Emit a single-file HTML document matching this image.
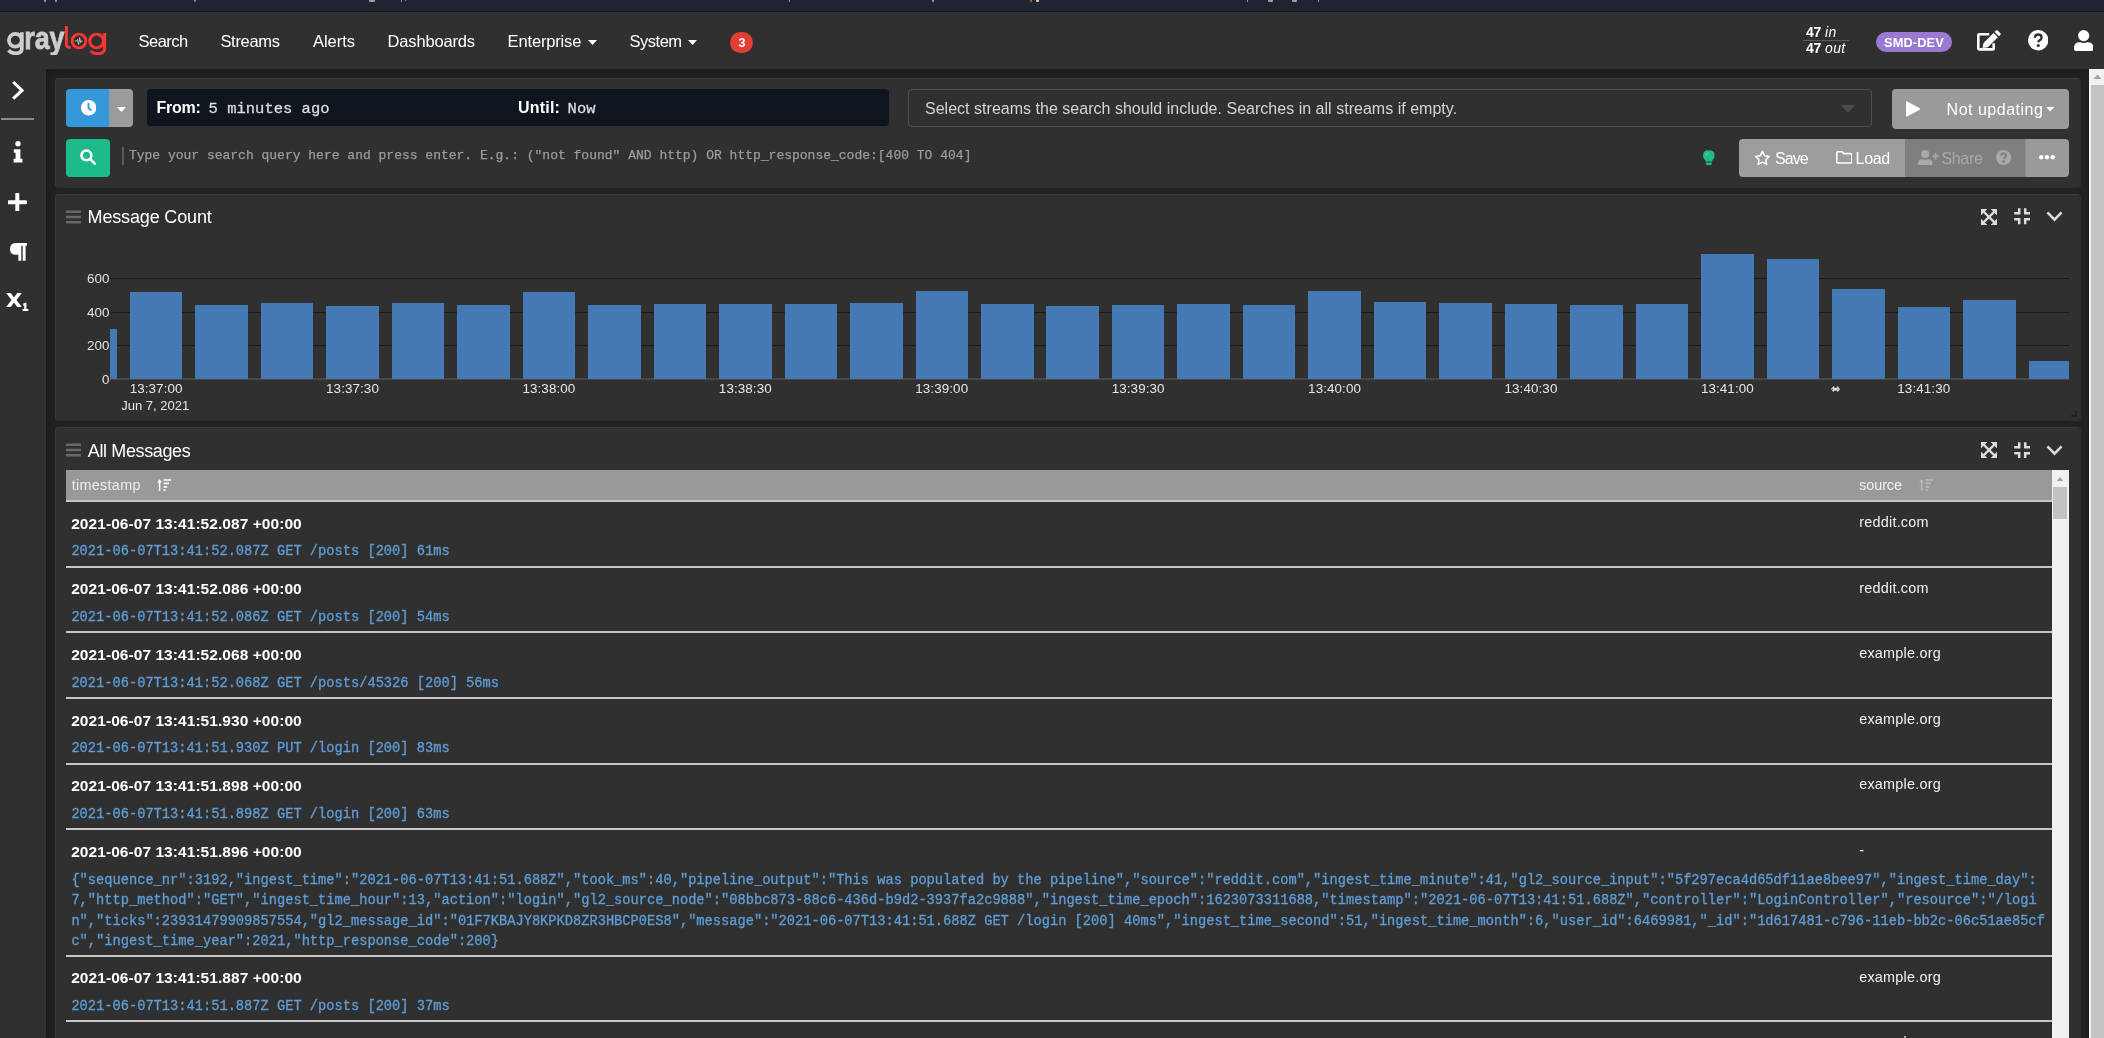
<!DOCTYPE html>
<html><head><meta charset="utf-8"><title>Graylog - Search</title>
<style>
html,body{margin:0;padding:0;width:2104px;height:1038px;overflow:hidden;}
body{width:2104px;height:1038px;overflow:hidden;background:#222;position:relative;font-family:"Liberation Sans",sans-serif;}
div,span.t,svg{position:absolute;}
div{box-sizing:border-box;}
.t{white-space:pre;line-height:1em;}
.s{font-family:"Liberation Sans",sans-serif;}
.m{font-family:"Liberation Mono",monospace;}
.panel{background:#303030;border:1px solid #393939;border-right-color:#2d2d2d;border-bottom-color:#2d2d2d;border-radius:4px;}
.sep{left:66px;width:1986px;height:2px;background:#c6c6c6;}
</style></head><body><div id="w" style="left:0;top:0;width:2104px;height:1038px;will-change:transform;overflow:hidden;">

<div style="left:0px;top:0px;width:2104px;height:12px;background:#1f2430;border-bottom:1px solid #171a22;"></div>
<div style="left:44px;top:0px;width:1.6px;height:2px;background:#9a9da5;border-radius:0 0 1px 1px;"></div>
<div style="left:55px;top:0px;width:1.6px;height:2px;background:#9a9da5;border-radius:0 0 1px 1px;"></div>
<div style="left:194.4px;top:0px;width:1.6px;height:2.4px;background:#83868e;border-radius:0 0 1px 1px;"></div>
<div style="left:369.4px;top:0px;width:5.6px;height:1.8px;background:#9a9da5;border-radius:0 0 1px 1px;"></div>
<div style="left:400.6px;top:0px;width:1.4px;height:2px;background:#83868e;border-radius:0 0 1px 1px;"></div>
<div style="left:405px;top:0px;width:1px;height:1.4px;background:#7c8aa8;border-radius:0 0 1px 1px;"></div>
<div style="left:788.6px;top:0px;width:1.6px;height:2px;background:#9a9da5;border-radius:0 0 1px 1px;"></div>
<div style="left:932px;top:0px;width:1.6px;height:2px;background:#9a9da5;border-radius:0 0 1px 1px;"></div>
<div style="left:1030px;top:0px;width:2px;height:1.6px;background:#c0504d;border-radius:0 0 1px 1px;"></div>
<div style="left:1036px;top:0px;width:3px;height:1.6px;background:#c9c9c9;border-radius:0 0 1px 1px;"></div>
<div style="left:1246.6px;top:0px;width:1.6px;height:2.2px;background:#9a9da5;border-radius:0 0 1px 1px;"></div>
<div style="left:1268px;top:0px;width:5px;height:1.8px;background:#9a9da5;border-radius:0 0 1px 1px;"></div>
<div style="left:1292px;top:0px;width:5px;height:1.8px;background:#9a9da5;border-radius:0 0 1px 1px;"></div>
<div style="left:1317.6px;top:0px;width:1.6px;height:2.2px;background:#9a9da5;border-radius:0 0 1px 1px;"></div>
<div style="left:0px;top:12px;width:2104px;height:57px;background:#303030;"></div>
<div style="left:46px;top:69px;width:2044px;height:969px;background:#222;box-shadow:inset 0 6px 6px -4px #1a1a1a, inset 6px 0 6px -4px #1c1c1c;"></div>
<div style="left:0px;top:69px;width:46px;height:969px;background:#303030;"></div>
<div style="left:2089px;top:69px;width:15px;height:969px;background:#c4c4c4;border-left:2px solid #f4f4f4;"></div>
<div style="left:2091px;top:69px;width:13px;height:16px;background:#f1f1f1;"></div>
<svg style="left:2093px;top:74px;" width="9" height="6" viewBox="0 0 9 6"><path d="M4.5 0.5 L8.5 5 H0.5Z" fill="#a3a3a3"/></svg>
<svg style="left:0px;top:20px;" width="120" height="35.3" viewBox="0 0 120 35.3"><g fill="none" stroke="#cdcdcd" stroke-width="3.7"><circle cx="15.3" cy="20.3" r="6.4"/><path d="M21.85 12.2 V28.4 Q21.85 33.3 15.6 33.3 Q11.2 33.3 8.4 30.4"/></g><text x="24.2" y="28.6" font-family="Liberation Sans, sans-serif" font-weight="700" font-size="31.5" fill="#cdcdcd" stroke="#cdcdcd" stroke-width="0.8" textLength="40.4" lengthAdjust="spacingAndGlyphs">ray</text><g fill="none" stroke="#ff3633" stroke-width="2.9"><path d="M66.4 6 V24.6 Q66.4 27.6 70.6 27.2" /><circle cx="79" cy="21" r="6.9"/><circle cx="96.6" cy="21" r="6.9"/><path d="M104.7 13 V27.6 Q104.7 34 97.2 33.7 Q93 33.6 90.6 31"/></g><path d="M74.8 21 H76.6 L77.6 19.4 L78.6 24.6 L79.6 17.6 L80.6 22.6 L81.2 21 H82.6" fill="none" stroke="#bbb" stroke-width="1"/></svg>
<span class="t s" style="left:138.6px;top:33px;font-size:16.5px;color:#ffffff;letter-spacing:-0.55px;">Search</span>
<span class="t s" style="left:220.4px;top:33px;font-size:16.5px;color:#ffffff;letter-spacing:-0.3px;">Streams</span>
<span class="t s" style="left:313px;top:33px;font-size:16.5px;color:#ffffff;letter-spacing:-0.05px;">Alerts</span>
<span class="t s" style="left:387.6px;top:33px;font-size:16.5px;color:#ffffff;letter-spacing:-0.18px;">Dashboards</span>
<span class="t s" style="left:507.6px;top:33px;font-size:16.5px;color:#ffffff;letter-spacing:-0.16px;">Enterprise</span>
<span class="t s" style="left:629.6px;top:33px;font-size:16.5px;color:#ffffff;letter-spacing:-0.5px;">System</span>
<svg style="left:588px;top:40px;" width="9" height="5" viewBox="0 0 9 5"><path d="M0 0H9L4.5 5Z" fill="#fff"/></svg>
<svg style="left:688px;top:40px;" width="9" height="5" viewBox="0 0 9 5"><path d="M0 0H9L4.5 5Z" fill="#fff"/></svg>
<div style="left:730.2px;top:32px;width:23.2px;height:21px;background:#e23e33;border-radius:10.5px;"></div>
<span class="t s" style="left:741.9px;top:37px;font-size:12.6px;color:#fff;font-weight:700;transform:translateX(-50%);">3</span>
<span class="t s" style="left:1806px;top:25px;font-size:14px;color:#fff;font-weight:700;letter-spacing:-0.2px;">47</span>
<span class="t s" style="left:1825px;top:25px;font-size:14px;color:#fff;letter-spacing:0.4px;font-style:italic;">in</span>
<div style="left:1803px;top:40px;width:46px;height:1px;background:#5c5c5c;"></div>
<span class="t s" style="left:1806px;top:41px;font-size:14px;color:#fff;font-weight:700;letter-spacing:-0.2px;">47</span>
<span class="t s" style="left:1825px;top:41px;font-size:14px;color:#fff;letter-spacing:0.4px;font-style:italic;">out</span>
<div style="left:1876px;top:32px;width:76px;height:20px;background:#9b78d2;border-radius:10px;"></div>
<span class="t s" style="left:1884px;top:37px;font-size:12.8px;color:#fff;font-weight:700;letter-spacing:0.12px;">SMD-DEV</span>
<svg style="left:1976px;top:29px;" width="27" height="23" viewBox="0 0 27 23"><path d="M17.7 14.2 V19.2 Q17.7 20.4 16.5 20.4 H3.5 Q2.3 20.4 2.3 19.2 V6.5 Q2.3 5.3 3.5 5.3 H13.2" fill="none" stroke="#fff" stroke-width="2.6"/><path d="M7.5 14 L17.6 3.9 L21.9 8.2 L11.8 18.3 L6.6 19.1 Z" fill="#fff"/><path d="M18.6 2.9 L19.9 1.6 Q20.8 0.8 21.7 1.6 L24.3 4.2 Q25.1 5.1 24.3 6 L23 7.3 Z" fill="#fff"/></svg>
<svg style="left:2028px;top:30.4px;" width="20.4" height="20.4" viewBox="0 0 20 20"><circle cx="10" cy="10" r="10" fill="#fff"/><path d="M6.7 7.6 Q6.9 4.4 10.1 4.4 Q13.3 4.4 13.3 7.3 Q13.3 9 11.4 10 Q10.2 10.7 10.2 12" fill="none" stroke="#303030" stroke-width="2.3"/><circle cx="10.1" cy="15.2" r="1.5" fill="#303030"/></svg>
<svg style="left:2074px;top:29.8px;" width="19.4" height="21" viewBox="0 0 19.4 21"><circle cx="9.7" cy="5.6" r="5.6" fill="#fff"/><path d="M0 19 V18 Q0 12.2 5.6 12.2 H6.2 Q9.7 13.8 13.2 12.2 H13.8 Q19.4 12.2 19.4 18 V19 Q19.4 21 17.4 21 H2 Q0 21 0 19 Z" fill="#fff"/></svg>
<svg style="left:11px;top:80px;" width="14" height="20" viewBox="0 0 14 20"><path d="M2.2 2 L11 10.4 L2.2 18.6" fill="none" stroke="#fff" stroke-width="3.1" stroke-linecap="butt"/></svg>
<div style="left:1px;top:118px;width:33px;height:2px;background:#8a8a8a;"></div>
<svg style="left:12.6px;top:141.4px;" width="10" height="21.6" viewBox="0 0 10 21.6"><circle cx="5" cy="2.8" r="2.7" fill="#fff"/><path d="M0.8 8.2 H7.4 V17.8 H9.4 V21.4 H0.6 V17.8 H2.6 V11.8 H0.8 Z" fill="#fff"/></svg>
<svg style="left:8.2px;top:193px;" width="18.6" height="18.4" viewBox="0 0 18.6 18.4"><path d="M9.3 1.2 V17.2 M1.2 9.2 H17.4" stroke="#fff" stroke-width="4" stroke-linecap="round"/></svg>
<svg style="left:9.6px;top:243px;" width="17" height="17.8" viewBox="0 0 17 17.8"><path d="M6.4 0 H17 V2.8 H15.6 V17.8 H12.7 V2.8 H11.3 V17.8 H8.4 V11.8 H6.2 Q0 11.8 0 5.9 Q0 0 6.4 0 Z" fill="#fff"/></svg>
<svg style="left:6px;top:293px;" width="23" height="18.4" viewBox="0 0 23 18.4"><path d="M0.2 0 H4.8 L8 4.4 L11.2 0 H15.8 L10.5 7 L15.8 14 H11.2 L8 9.6 L4.8 14 H0.2 L5.5 7 Z" fill="#fff"/><path d="M17.2 10.6 L20.4 9.4 V16 H22.4 V18.2 H16.6 V16 H18.2 V12.4 L17.2 12.8 Z" fill="#fff"/></svg>
<div class="panel" style="left:55px;top:78px;width:2026px;height:110px;"></div>
<div style="left:66px;top:89px;width:43.4px;height:37.6px;background:#3498db;border-radius:4px 0 0 4px;"></div>
<div style="left:109.4px;top:89px;width:24px;height:37.6px;background:#9b9b9b;border-radius:0 4px 4px 0;"></div>
<svg style="left:80.6px;top:100.4px;" width="15.4" height="15.4" viewBox="0 0 15.4 15.4"><circle cx="7.7" cy="7.7" r="7.7" fill="#fff"/><path d="M7.5 3.6 V8.1 L9.9 10" fill="none" stroke="#3498db" stroke-width="1.9" stroke-linecap="round"/></svg>
<svg style="left:116.6px;top:107px;" width="9" height="5" viewBox="0 0 9 5"><path d="M0 0H9L4.5 5Z" fill="#fff"/></svg>
<div style="left:146.8px;top:89.4px;width:742px;height:37px;background:#0e151e;border-radius:4px;"></div>
<span class="t s" style="left:156.6px;top:100px;font-size:16px;color:#fff;font-weight:700;letter-spacing:-0.3px;">From:</span>
<span class="t m" style="left:208.6px;top:102px;font-size:15.5px;color:#dcdcdc;-webkit-text-stroke:0.3px #dcdcdc;">5 minutes ago</span>
<span class="t s" style="left:518px;top:100px;font-size:16px;color:#fff;font-weight:700;letter-spacing:0.2px;">Until:</span>
<span class="t m" style="left:567.6px;top:102px;font-size:15.5px;color:#dcdcdc;-webkit-text-stroke:0.3px #dcdcdc;">Now</span>
<div style="left:908px;top:89px;width:964px;height:37.6px;border:1px solid #4e4e4e;border-radius:4px;"></div>
<span class="t s" style="left:925px;top:101px;font-size:16px;color:#d4d4d4;letter-spacing:0.02px;">Select streams the search should include. Searches in all streams if empty.</span>
<svg style="left:1841px;top:105px;" width="14" height="8" viewBox="0 0 14 8"><path d="M0 0H14L7 8Z" fill="#4c4c4c"/></svg>
<div style="left:1892px;top:89px;width:177px;height:39.6px;background:#9a9a9a;border-radius:4px;"></div>
<svg style="left:1906px;top:101px;" width="14.4" height="16" viewBox="0 0 14.4 16"><path d="M1.2 0.4 Q0 -0.2 0 1.4 V14.6 Q0 16.2 1.2 15.6 L13.4 9 Q14.4 8 13.4 7 Z" fill="#fff"/></svg>
<span class="t s" style="left:1946.6px;top:102px;font-size:16px;color:#fff;letter-spacing:0.5px;">Not updating</span>
<svg style="left:2046px;top:107.2px;" width="8.4" height="4.6" viewBox="0 0 9 5"><path d="M0 0H9L4.5 5Z" fill="#fff"/></svg>
<div style="left:66px;top:139.4px;width:44.4px;height:37.4px;background:#1dbb8b;border-radius:4px;"></div>
<svg style="left:80px;top:148.9px;" width="16.4" height="16" viewBox="0 0 16.4 16"><circle cx="6.4" cy="6.4" r="4.9" fill="none" stroke="#fff" stroke-width="2.6"/><path d="M10.2 10 L14.8 14.6" stroke="#fff" stroke-width="2.5" stroke-linecap="round"/></svg>
<div style="left:122.4px;top:147.4px;width:2px;height:17.4px;background:#595959;"></div>
<span class="t m" style="left:128.9px;top:149px;font-size:13px;color:#9c9c9c;-webkit-text-stroke:0.25px #9c9c9c;">Type your search query here and press enter. E.g.: (&quot;not found&quot; AND http) OR http_response_code:[400 TO 404]</span>
<svg style="left:1703px;top:149.8px;" width="11.6" height="15.6" viewBox="0 0 12.4 16"><path d="M6.2 0 Q12.4 0 12.4 5.8 Q12.4 8 10.8 9.8 Q9.8 11 9.6 12 H2.8 Q2.6 11 1.6 9.8 Q0 8 0 5.8 Q0 0 6.2 0 Z" fill="#1dbb8b"/><path d="M2.9 13 H9.5 V14.2 L8.6 15.6 Q8.4 16 7.8 16 H4.6 Q4 16 3.8 15.6 L2.9 14.2 Z" fill="#1dbb8b"/><path d="M3 5.6 Q3.2 3 6 2.8" fill="none" stroke="#5fd9b5" stroke-width="1"/></svg>
<div style="left:1739px;top:139px;width:166px;height:37.8px;background:#9d9d9d;border-radius:4px 0 0 4px;"></div>
<div style="left:1905px;top:139px;width:120px;height:37.8px;background:#7f7f7f;"></div>
<div style="left:2025px;top:139px;width:44px;height:37.8px;background:#9a9a9a;border-radius:0 4px 4px 0;border-left:1px solid #8c8c8c;"></div>
<svg style="left:1753.6px;top:149.6px;" width="16.8" height="16" viewBox="0 0 16.8 16"><path d="M8.4 1.4 L10.5 5.7 L15.2 6.4 L11.8 9.7 L12.6 14.4 L8.4 12.2 L4.2 14.4 L5 9.7 L1.6 6.4 L6.3 5.7 Z" fill="none" stroke="#fff" stroke-width="1.5" stroke-linejoin="round"/></svg>
<span class="t s" style="left:1775px;top:151px;font-size:16px;color:#fff;letter-spacing:-0.95px;">Save</span>
<svg style="left:1835.6px;top:151.4px;" width="16.6" height="12.8" viewBox="0 0 16.6 12.8"><path d="M1.9 0.8 H6 L7.8 2.6 H14.7 Q15.8 2.6 15.8 3.7 V10.9 Q15.8 12 14.7 12 H1.9 Q0.8 12 0.8 10.9 V1.9 Q0.8 0.8 1.9 0.8 Z" fill="none" stroke="#fff" stroke-width="1.6"/></svg>
<span class="t s" style="left:1855.6px;top:151px;font-size:16px;color:#fff;letter-spacing:-0.35px;">Load</span>
<svg style="left:1917.6px;top:149.8px;" width="21" height="15.6" viewBox="0 0 21 15.6"><circle cx="7.2" cy="4" r="4" fill="#a9a9a9"/><path d="M0 15.6 V13.4 Q0 9.2 4.2 9.2 H4.8 Q7.2 10.2 9.6 9.2 H10.2 Q14.4 9.2 14.4 13.4 V15.6 Z" fill="#a9a9a9"/><path d="M17.6 3.2 V9.4 M14.6 6.3 H20.6" stroke="#a9a9a9" stroke-width="1.9"/></svg>
<span class="t s" style="left:1941.4px;top:151px;font-size:16px;color:#a9a9a9;letter-spacing:-0.3px;">Share</span>
<svg style="left:1996px;top:150px;" width="15.2" height="15.2" viewBox="0 0 20 20"><circle cx="10" cy="10" r="10" fill="#a9a9a9"/><path d="M6.7 7.6 Q6.9 4.4 10.1 4.4 Q13.3 4.4 13.3 7.3 Q13.3 9 11.4 10 Q10.2 10.7 10.2 12" fill="none" stroke="#7f7f7f" stroke-width="2.4"/><circle cx="10.1" cy="15.2" r="1.6" fill="#7f7f7f"/></svg>
<svg style="left:2038.8px;top:155.2px;" width="16" height="4.6" viewBox="0 0 16 4.6"><circle cx="2.3" cy="2.3" r="2.2" fill="#fff"/><circle cx="8" cy="2.3" r="2.2" fill="#fff"/><circle cx="13.7" cy="2.3" r="2.2" fill="#fff"/></svg>
<div class="panel" style="left:55px;top:194px;width:2026px;height:227px;"></div>
<svg style="left:66.2px;top:209.6px;" width="15" height="14" viewBox="0 0 15 14"><path d="M0 1.7 H15 M0 7 H15 M0 12.3 H15" stroke="#686868" stroke-width="2.6"/></svg>
<span class="t s" style="left:87.6px;top:208px;font-size:18px;color:#fff;letter-spacing:-0.16px;">Message Count</span>
<svg style="left:1981px;top:208.6px;" width="16" height="16" viewBox="0 0 16 16"><path d="M2.6 2.6 L13.4 13.4 M13.4 2.6 L2.6 13.4" stroke="#dcdcdc" stroke-width="2.2"/><path d="M0 0 H6 L0 6 Z M16 0 V6 L10 0 Z M0 16 V10 L6 16 Z M16 16 H10 L16 10 Z" fill="#dcdcdc" stroke="#dcdcdc" stroke-width="0.6" stroke-linejoin="round"/></svg>
<svg style="left:2014px;top:208.4px;" width="16.4" height="16.4" viewBox="0 0 16.4 16.4"><path d="M0.2 5.2 H5.2 V0.2 M11.2 0.2 V5.2 H16.2 M0.2 11.2 H5.2 V16.2 M11.2 16.2 V11.2 H16.2" fill="none" stroke="#dcdcdc" stroke-width="2.5"/></svg>
<svg style="left:2046.4px;top:211.2px;" width="17" height="11" viewBox="0 0 17 11"><path d="M1.4 1.4 L8.5 8.6 L15.6 1.4" fill="none" stroke="#dcdcdc" stroke-width="2.5"/></svg>
<div style="left:110px;top:278px;width:1959px;height:1px;background:#1b1b1b;"></div>
<span class="t s" style="left:109.4px;top:272px;font-size:13.4px;color:#e2e2e2;transform:translateX(-100%);">600</span>
<div style="left:110px;top:312px;width:1959px;height:1px;background:#1b1b1b;"></div>
<span class="t s" style="left:109.4px;top:306px;font-size:13.4px;color:#e2e2e2;transform:translateX(-100%);">400</span>
<div style="left:110px;top:345px;width:1959px;height:1px;background:#1b1b1b;"></div>
<span class="t s" style="left:109.4px;top:339px;font-size:13.4px;color:#e2e2e2;transform:translateX(-100%);">200</span>
<div style="left:110px;top:378.4px;width:1959px;height:2px;background:#484848;"></div>
<span class="t s" style="left:109.4px;top:373px;font-size:13.4px;color:#e2e2e2;transform:translateX(-100%);">0</span>
<div style="left:110px;top:328.8px;width:7.0px;height:50.30000000000001px;background:#4579b4;"></div>
<div style="left:129.8px;top:292.4px;width:52.5px;height:86.7px;background:#4579b4;"></div>
<div style="left:195.3px;top:305.3px;width:52.5px;height:73.8px;background:#4579b4;"></div>
<div style="left:260.8px;top:303.3px;width:52.5px;height:75.8px;background:#4579b4;"></div>
<div style="left:326.3px;top:305.6px;width:52.5px;height:73.5px;background:#4579b4;"></div>
<div style="left:391.7px;top:303.3px;width:52.5px;height:75.8px;background:#4579b4;"></div>
<div style="left:457.2px;top:305px;width:52.5px;height:74.1px;background:#4579b4;"></div>
<div style="left:522.7px;top:292px;width:52.5px;height:87.1px;background:#4579b4;"></div>
<div style="left:588.1px;top:304.6px;width:52.5px;height:74.5px;background:#4579b4;"></div>
<div style="left:653.6px;top:304.3px;width:52.5px;height:74.8px;background:#4579b4;"></div>
<div style="left:719.1px;top:304.3px;width:52.5px;height:74.8px;background:#4579b4;"></div>
<div style="left:784.6px;top:304px;width:52.5px;height:75.1px;background:#4579b4;"></div>
<div style="left:850.0px;top:303.3px;width:52.5px;height:75.8px;background:#4579b4;"></div>
<div style="left:915.5px;top:290.7px;width:52.5px;height:88.4px;background:#4579b4;"></div>
<div style="left:981.0px;top:303.7px;width:52.5px;height:75.4px;background:#4579b4;"></div>
<div style="left:1046.4px;top:305.6px;width:52.5px;height:73.5px;background:#4579b4;"></div>
<div style="left:1111.9px;top:305px;width:52.5px;height:74.1px;background:#4579b4;"></div>
<div style="left:1177.4px;top:303.7px;width:52.5px;height:75.4px;background:#4579b4;"></div>
<div style="left:1242.8px;top:305px;width:52.5px;height:74.1px;background:#4579b4;"></div>
<div style="left:1308.3px;top:291px;width:52.5px;height:88.1px;background:#4579b4;"></div>
<div style="left:1373.8px;top:301.7px;width:52.5px;height:77.4px;background:#4579b4;"></div>
<div style="left:1439.2px;top:303.3px;width:52.5px;height:75.8px;background:#4579b4;"></div>
<div style="left:1504.7px;top:304px;width:52.5px;height:75.1px;background:#4579b4;"></div>
<div style="left:1570.2px;top:305px;width:52.5px;height:74.1px;background:#4579b4;"></div>
<div style="left:1635.7px;top:304px;width:52.5px;height:75.1px;background:#4579b4;"></div>
<div style="left:1701.1px;top:253.9px;width:52.5px;height:125.2px;background:#4579b4;"></div>
<div style="left:1766.6px;top:259.4px;width:52.5px;height:119.7px;background:#4579b4;"></div>
<div style="left:1832.1px;top:289.1px;width:52.5px;height:90.0px;background:#4579b4;"></div>
<div style="left:1897.5px;top:306.6px;width:52.5px;height:72.5px;background:#4579b4;"></div>
<div style="left:1963.0px;top:300.4px;width:52.5px;height:78.7px;background:#4579b4;"></div>
<div style="left:2028.5px;top:361.2px;width:40.5px;height:17.9px;background:#4579b4;"></div>
<span class="t s" style="left:156.1px;top:382px;font-size:13.4px;color:#e8e8e8;letter-spacing:0.1px;transform:translateX(-50%);">13:37:00</span>
<span class="t s" style="left:352.51px;top:382px;font-size:13.4px;color:#e8e8e8;letter-spacing:0.1px;transform:translateX(-50%);">13:37:30</span>
<span class="t s" style="left:548.92px;top:382px;font-size:13.4px;color:#e8e8e8;letter-spacing:0.1px;transform:translateX(-50%);">13:38:00</span>
<span class="t s" style="left:745.33px;top:382px;font-size:13.4px;color:#e8e8e8;letter-spacing:0.1px;transform:translateX(-50%);">13:38:30</span>
<span class="t s" style="left:941.74px;top:382px;font-size:13.4px;color:#e8e8e8;letter-spacing:0.1px;transform:translateX(-50%);">13:39:00</span>
<span class="t s" style="left:1138.1499999999999px;top:382px;font-size:13.4px;color:#e8e8e8;letter-spacing:0.1px;transform:translateX(-50%);">13:39:30</span>
<span class="t s" style="left:1334.56px;top:382px;font-size:13.4px;color:#e8e8e8;letter-spacing:0.1px;transform:translateX(-50%);">13:40:00</span>
<span class="t s" style="left:1530.9699999999998px;top:382px;font-size:13.4px;color:#e8e8e8;letter-spacing:0.1px;transform:translateX(-50%);">13:40:30</span>
<span class="t s" style="left:1727.3799999999999px;top:382px;font-size:13.4px;color:#e8e8e8;letter-spacing:0.1px;transform:translateX(-50%);">13:41:00</span>
<span class="t s" style="left:1923.79px;top:382px;font-size:13.4px;color:#e8e8e8;letter-spacing:0.1px;transform:translateX(-50%);">13:41:30</span>
<span class="t s" style="left:155.2px;top:399px;font-size:13px;color:#e8e8e8;transform:translateX(-50%);">Jun 7, 2021</span>
<svg style="left:1830.8px;top:386px;" width="9.2" height="6.2" viewBox="0 0 9.2 6.2"><path d="M0 3.1 L2.7 0.1 L3.3 1.7 H5.9 L6.5 0.1 L9.2 3.1 L6.5 6.1 L5.9 4.5 H3.3 L2.7 6.1 Z" fill="#e4e4e4"/><circle cx="1.7" cy="3.1" r="0.55" fill="#111"/><path d="M6.6 2.3 L7.8 3.1 L6.6 3.9Z" fill="#333"/></svg>
<svg style="left:2070px;top:410px;" width="7" height="7" viewBox="0 0 7 7"><path d="M6 1 V6 H1" fill="none" stroke="#1c1c1c" stroke-width="1.4"/></svg>
<div class="panel" style="left:55px;top:427px;width:2026px;height:640px;"></div>
<svg style="left:66.2px;top:443.4px;" width="15" height="14" viewBox="0 0 15 14"><path d="M0 1.7 H15 M0 7 H15 M0 12.3 H15" stroke="#686868" stroke-width="2.6"/></svg>
<span class="t s" style="left:87.8px;top:442px;font-size:18px;color:#fff;letter-spacing:-0.38px;">All Messages</span>
<svg style="left:1981px;top:442.2px;" width="16" height="16" viewBox="0 0 16 16"><path d="M2.6 2.6 L13.4 13.4 M13.4 2.6 L2.6 13.4" stroke="#dcdcdc" stroke-width="2.2"/><path d="M0 0 H6 L0 6 Z M16 0 V6 L10 0 Z M0 16 V10 L6 16 Z M16 16 H10 L16 10 Z" fill="#dcdcdc" stroke="#dcdcdc" stroke-width="0.6" stroke-linejoin="round"/></svg>
<svg style="left:2014px;top:442.0px;" width="16.4" height="16.4" viewBox="0 0 16.4 16.4"><path d="M0.2 5.2 H5.2 V0.2 M11.2 0.2 V5.2 H16.2 M0.2 11.2 H5.2 V16.2 M11.2 16.2 V11.2 H16.2" fill="none" stroke="#dcdcdc" stroke-width="2.5"/></svg>
<svg style="left:2046.4px;top:444.8px;" width="17" height="11" viewBox="0 0 17 11"><path d="M1.4 1.4 L8.5 8.6 L15.6 1.4" fill="none" stroke="#dcdcdc" stroke-width="2.5"/></svg>
<div style="left:66px;top:470.4px;width:1986px;height:31.6px;background:#999;border-bottom:2px solid #c4c4c4;"></div>
<span class="t s" style="left:71.8px;top:478px;font-size:14.4px;color:#ececec;letter-spacing:0.28px;">timestamp</span>
<svg style="left:157px;top:479px;" width="14" height="12.4" viewBox="0 0 14 12.4"><g opacity="1"><path d="M2.6 12.4 V2.4" stroke="#fff" stroke-width="1.5"/><path d="M0 3.6 L2.6 0.2 L5.2 3.6 Z" fill="#fff"/><path d="M6.6 1 H14 M6.6 4.4 H12 M6.6 7.8 H10.2 M6.6 11.2 H8.6" stroke="#fff" stroke-width="1.7"/></g></svg>
<span class="t s" style="left:1859.2px;top:478px;font-size:14.4px;color:#f0f0f0;letter-spacing:-0.08px;">source</span>
<svg style="left:1919.4px;top:479px;" width="14" height="12.4" viewBox="0 0 14 12.4"><g opacity="0.75"><path d="M2.6 12.4 V2.4" stroke="#c4c4c4" stroke-width="1.5"/><path d="M0 3.6 L2.6 0.2 L5.2 3.6 Z" fill="#c4c4c4"/><path d="M6.6 1 H14 M6.6 4.4 H12 M6.6 7.8 H10.2 M6.6 11.2 H8.6" stroke="#c4c4c4" stroke-width="1.7"/></g></svg>
<div style="left:2052px;top:470.4px;width:17px;height:600px;background:#f1f1f1;"></div>
<svg style="left:2056.3px;top:476.8px;" width="8" height="4.4" viewBox="0 0 8 5"><path d="M4 0 L8 5 H0Z" fill="#a3a3a3"/></svg>
<div style="left:2053px;top:487px;width:14.4px;height:32.4px;background:#c1c1c1;"></div>
<span class="t s" style="left:71.2px;top:516px;font-size:15.5px;color:#fff;font-weight:700;letter-spacing:0.06px;">2021-06-07 13:41:52.087 +00:00</span>
<span class="t s" style="left:1859.2px;top:515px;font-size:14.4px;color:#f2f2f2;letter-spacing:0.24px;">reddit.com</span>
<span class="t m" style="left:71.4px;top:545px;font-size:13.71px;color:#5f9dd6;-webkit-text-stroke:0.3px #5f9dd6;">2021-06-07T13:41:52.087Z GET /posts [200] 61ms</span>
<div class="sep" style="top:565.9px"></div>
<span class="t s" style="left:71.2px;top:581px;font-size:15.5px;color:#fff;font-weight:700;letter-spacing:0.06px;">2021-06-07 13:41:52.086 +00:00</span>
<span class="t s" style="left:1859.2px;top:581px;font-size:14.4px;color:#f2f2f2;letter-spacing:0.24px;">reddit.com</span>
<span class="t m" style="left:71.4px;top:611px;font-size:13.71px;color:#5f9dd6;-webkit-text-stroke:0.3px #5f9dd6;">2021-06-07T13:41:52.086Z GET /posts [200] 54ms</span>
<div class="sep" style="top:631.4px"></div>
<span class="t s" style="left:71.2px;top:647px;font-size:15.5px;color:#fff;font-weight:700;letter-spacing:0.06px;">2021-06-07 13:41:52.068 +00:00</span>
<span class="t s" style="left:1859.2px;top:646px;font-size:14.4px;color:#f2f2f2;letter-spacing:0.24px;">example.org</span>
<span class="t m" style="left:71.4px;top:677px;font-size:13.71px;color:#5f9dd6;-webkit-text-stroke:0.3px #5f9dd6;">2021-06-07T13:41:52.068Z GET /posts/45326 [200] 56ms</span>
<div class="sep" style="top:697.0px"></div>
<span class="t s" style="left:71.2px;top:713px;font-size:15.5px;color:#fff;font-weight:700;letter-spacing:0.06px;">2021-06-07 13:41:51.930 +00:00</span>
<span class="t s" style="left:1859.2px;top:712px;font-size:14.4px;color:#f2f2f2;letter-spacing:0.24px;">example.org</span>
<span class="t m" style="left:71.4px;top:742px;font-size:13.71px;color:#5f9dd6;-webkit-text-stroke:0.3px #5f9dd6;">2021-06-07T13:41:51.930Z PUT /login [200] 83ms</span>
<div class="sep" style="top:762.6px"></div>
<span class="t s" style="left:71.2px;top:778px;font-size:15.5px;color:#fff;font-weight:700;letter-spacing:0.06px;">2021-06-07 13:41:51.898 +00:00</span>
<span class="t s" style="left:1859.2px;top:777px;font-size:14.4px;color:#f2f2f2;letter-spacing:0.24px;">example.org</span>
<span class="t m" style="left:71.4px;top:808px;font-size:13.71px;color:#5f9dd6;-webkit-text-stroke:0.3px #5f9dd6;">2021-06-07T13:41:51.898Z GET /login [200] 63ms</span>
<div class="sep" style="top:828.1px"></div>
<span class="t s" style="left:71.2px;top:844px;font-size:15.5px;color:#fff;font-weight:700;letter-spacing:0.06px;">2021-06-07 13:41:51.896 +00:00</span>
<span class="t s" style="left:1859.2px;top:843px;font-size:14.4px;color:#f2f2f2;letter-spacing:0.24px;">-</span>
<span class="t m" style="left:71.4px;top:874px;font-size:13.71px;color:#5f9dd6;-webkit-text-stroke:0.3px #5f9dd6;">{&quot;sequence_nr&quot;:3192,&quot;ingest_time&quot;:&quot;2021-06-07T13:41:51.688Z&quot;,&quot;took_ms&quot;:40,&quot;pipeline_output&quot;:&quot;This was populated by the pipeline&quot;,&quot;source&quot;:&quot;reddit.com&quot;,&quot;ingest_time_minute&quot;:41,&quot;gl2_source_input&quot;:&quot;5f297eca4d65df11ae8bee97&quot;,&quot;ingest_time_day&quot;:</span>
<span class="t m" style="left:71.4px;top:894px;font-size:13.71px;color:#5f9dd6;-webkit-text-stroke:0.3px #5f9dd6;">7,&quot;http_method&quot;:&quot;GET&quot;,&quot;ingest_time_hour&quot;:13,&quot;action&quot;:&quot;login&quot;,&quot;gl2_source_node&quot;:&quot;08bbc873-88c6-436d-b9d2-3937fa2c9888&quot;,&quot;ingest_time_epoch&quot;:1623073311688,&quot;timestamp&quot;:&quot;2021-06-07T13:41:51.688Z&quot;,&quot;controller&quot;:&quot;LoginController&quot;,&quot;resource&quot;:&quot;/logi</span>
<span class="t m" style="left:71.4px;top:915px;font-size:13.71px;color:#5f9dd6;-webkit-text-stroke:0.3px #5f9dd6;">n&quot;,&quot;ticks&quot;:23931479909857554,&quot;gl2_message_id&quot;:&quot;01F7KBAJY8KPKD8ZR3HBCP0ES8&quot;,&quot;message&quot;:&quot;2021-06-07T13:41:51.688Z GET /login [200] 40ms&quot;,&quot;ingest_time_second&quot;:51,&quot;ingest_time_month&quot;:6,&quot;user_id&quot;:6469981,&quot;_id&quot;:&quot;1d617481-c796-11eb-bb2c-06c51ae85cf</span>
<span class="t m" style="left:71.4px;top:935px;font-size:13.71px;color:#5f9dd6;-webkit-text-stroke:0.3px #5f9dd6;">c&quot;,&quot;ingest_time_year&quot;:2021,&quot;http_response_code&quot;:200}</span>
<div class="sep" style="top:954.7px"></div>
<span class="t s" style="left:71.2px;top:970px;font-size:15.5px;color:#fff;font-weight:700;letter-spacing:0.06px;">2021-06-07 13:41:51.887 +00:00</span>
<span class="t s" style="left:1859.2px;top:970px;font-size:14.4px;color:#f2f2f2;letter-spacing:0.24px;">example.org</span>
<span class="t m" style="left:71.4px;top:1000px;font-size:13.71px;color:#5f9dd6;-webkit-text-stroke:0.3px #5f9dd6;">2021-06-07T13:41:51.887Z GET /posts [200] 37ms</span>
<div class="sep" style="top:1020.3px"></div>
<span class="t s" style="left:71.2px;top:1036px;font-size:15.5px;color:#fff;font-weight:700;letter-spacing:0.06px;">2021-06-07 13:41:51.880 +00:00</span>
<span class="t s" style="left:1859.2px;top:1035px;font-size:14.4px;color:#f2f2f2;letter-spacing:0.24px;">example.org</span>
</div></body></html>
